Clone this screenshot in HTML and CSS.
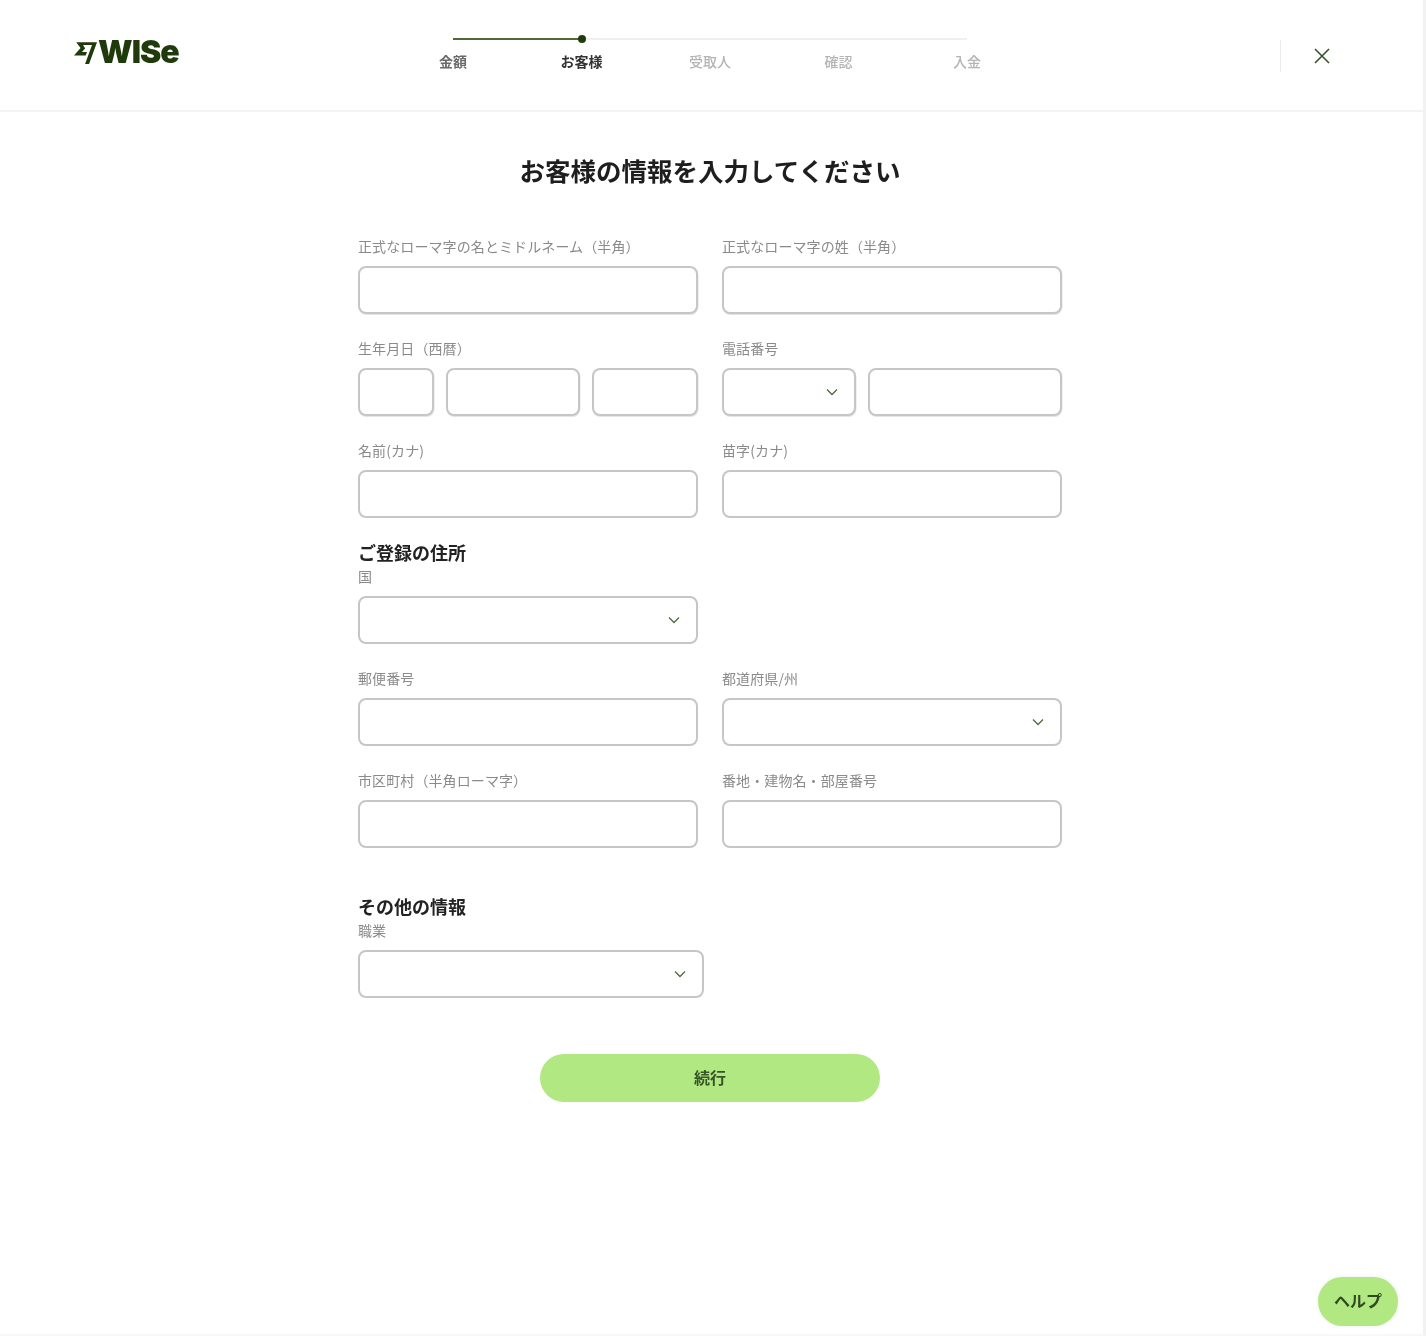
FILE: index.html
```html
<!DOCTYPE html>
<html lang="ja">
<head>
<meta charset="utf-8">
<title>お客様の情報</title>
<link rel="stylesheet" href="styles.css">
</head>
<body>
<div class="page">
  <header class="topbar">
    <div class="logo">
      <svg class="logo-flag" viewBox="0 0 24 24" aria-hidden="true"><path d="M6.826 7.232 0 15.21h12.188l1.37-3.762H8.335l3.191-3.69.01-.098L9.461 4.082h9.336L11.56 24h4.17L24 1.248H2.351l4.475 5.984Z"/></svg>
      <span class="logo-text">WISe</span>
    </div>
    <nav class="stepper">
      <div class="track"><div class="track-done"></div><div class="track-dot"></div></div>
      <ol class="steps">
        <li class="step done">金額</li>
        <li class="step current">お客様</li>
        <li class="step">受取人</li>
        <li class="step">確認</li>
        <li class="step">入金</li>
      </ol>
    </nav>
    <div class="close-wrap">
      <svg class="close" viewBox="0 0 16 16" aria-hidden="true"><path d="M1 1 15 15M15 1 1 15"/></svg>
    </div>
  </header>

  <main class="content">
    <h1 class="title">お客様の情報を入力してください</h1>
    <form class="form">
      <div class="grid">
        <div class="field"><label class="label">正式なローマ字の名とミドルネーム（半角）</label><div class="input raised"></div></div>
        <div class="field"><label class="label">正式なローマ字の姓（半角）</label><div class="input raised"></div></div>
        <div class="field"><label class="label">生年月日（西暦）</label>
          <div class="inline">
            <div class="input raised w-day"></div>
            <div class="input raised w-month"></div>
            <div class="input raised w-year"></div>
          </div>
        </div>
        <div class="field"><label class="label">電話番号</label>
          <div class="inline">
            <div class="input raised select w-code"><svg class="chev" viewBox="0 0 12 8"><path d="M1 1.5 6 6.5 11 1.5"/></svg></div>
            <div class="input raised w-phone"></div>
          </div>
        </div>
        <div class="field"><label class="label">名前(カナ)</label><div class="input"></div></div>
        <div class="field"><label class="label">苗字(カナ)</label><div class="input"></div></div>
      </div>

      <h2 class="section first">ご登録の住所</h2>
      <div class="grid">
        <div class="field"><label class="label">国</label><div class="input select"><svg class="chev" viewBox="0 0 12 8"><path d="M1 1.5 6 6.5 11 1.5"/></svg></div></div>
        <div class="spacer"></div>
        <div class="field"><label class="label">郵便番号</label><div class="input"></div></div>
        <div class="field"><label class="label">都道府県/州</label><div class="input select"><svg class="chev" viewBox="0 0 12 8"><path d="M1 1.5 6 6.5 11 1.5"/></svg></div></div>
        <div class="field"><label class="label">市区町村（半角ローマ字）</label><div class="input"></div></div>
        <div class="field"><label class="label">番地・建物名・部屋番号</label><div class="input"></div></div>
      </div>

      <h2 class="section second">その他の情報</h2>
      <div class="field wide"><label class="label">職業</label><div class="input select"><svg class="chev" viewBox="0 0 12 8"><path d="M1 1.5 6 6.5 11 1.5"/></svg></div></div>

      <div class="actions"><button type="button" class="continue">続行</button></div>
    </form>
  </main>

  <button type="button" class="help">ヘルプ</button>
</div>
</body>
</html>
```
FILE: styles.css
```css
* { box-sizing: border-box; }
html, body { margin: 0; padding: 0; background: #fff; }
body { font-family: "Noto Sans CJK JP", "Noto Sans", sans-serif; color: #1f1f1f; }
.page { position: relative; width: 1426px; height: 1336px; overflow: hidden; border-right: 3px solid #f2f2f2; border-bottom: 2px solid #f8f8f8; filter: blur(0.45px); }

.topbar { position: relative; height: 112px; border-bottom: 2px solid #f3f3f3; display: flex; align-items: flex-start; padding-left: 75px; }
.logo { display: flex; align-items: flex-start; width: 325px; height: 30px; margin-top: 36px; }
.logo-flag { width: 23px; height: 23px; margin: 5px 0 0 -1px; fill: #1f3a0b; flex: none; }
.logo-text { font-family: Inter, sans-serif; font-weight: 900; font-size: 32px; line-height: 32px; letter-spacing: -1px; color: #1f3a0b; margin-left: 1px; }

.stepper { width: 570px; margin-left: 25px; padding-top: 38px; }
.track { position: relative; height: 2px; margin: 0 28px; width: 514px; background: #f0f0f0; }
.track-done { width: 128px; height: 2px; background: #4d6a36; }
.track-dot { position: absolute; left: 125px; top: -3px; width: 8px; height: 8px; border-radius: 50%; background: #1f3a0b; }
.steps { list-style: none; display: flex; margin: 9px 0 0; padding: 0; }
.step { width: 128.5px; flex: none; text-align: center; font-size: 14px; line-height: 24px; font-weight: 500; color: #b4b4b4; }
.step:first-child { margin-left: -36.25px; }
.step.done { color: #6a6a6a; font-weight: 700; }
.step.current { color: #333; font-weight: 700; }

.close-wrap { position: absolute; left: 1280px; top: 40px; width: 60px; height: 32px; border-left: 1px solid #ececec; }
.close { position: absolute; left: 33px; top: 8px; width: 16px; height: 16px; fill: none; stroke: #37532a; stroke-width: 1.6; }

.content { width: 704px; margin-left: 358px; padding-top: 40px; }
.title { margin: 0 0 49px; font-size: 25.5px; line-height: 36px; font-weight: 700; text-align: center; color: #1e1e1e; }

.grid { display: grid; grid-template-columns: 340px 340px; column-gap: 24px; row-gap: 25px; }
.label { display: block; height: 20px; margin-bottom: 9px; font-size: 14px; line-height: 18px; letter-spacing: .1px; color: #8a8a8a; white-space: nowrap; }
.input { position: relative; height: 48px; border: 2px solid #c6c6c6; border-radius: 8px; background: #fff; }
.input.raised { box-shadow: 0.5px 1px 0 #e4e4e4; }
.inline { display: flex; gap: 12px; }
.w-day { width: 76px; }
.w-month { width: 134px; }
.w-year { width: 106px; }
.w-code { width: 134px; }
.w-phone { width: 194px; }
.chev { position: absolute; right: 16px; top: 50%; width: 12px; height: 8px; margin-top: -4px; fill: none; stroke: #4f6a3f; stroke-width: 1.3; }

.section { height: 26px; margin: 0 0 1px; font-size: 18px; line-height: 24px; font-weight: 700; color: #222; }
.section.first { margin-top: 22px; }
.section.second { margin-top: 46px; }
.wide { width: 346px; }

.actions { display: flex; justify-content: center; margin-top: 56px; }
.continue { width: 340px; height: 48px; border: 0; border-radius: 24px; background: #b1e881; font-family: inherit; font-size: 16px; font-weight: 700; color: #37532a; padding: 0 0 2px; }

.help { position: absolute; left: 1318px; top: 1277px; width: 80px; height: 49px; border: 0; border-radius: 25px; background: #b1e881; font-family: inherit; font-size: 16px; font-weight: 700; color: #2f4a20; padding: 0 0 3px; box-shadow: 0 0 4px rgba(0,0,0,.08); }
```
